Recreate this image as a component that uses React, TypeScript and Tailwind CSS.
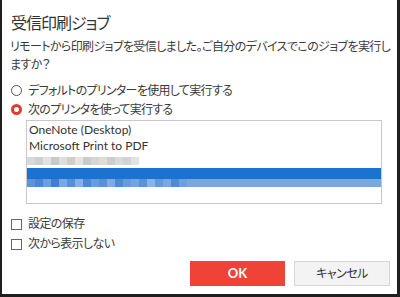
const font = "font-['Lato','Noto_Sans_CJK_JP',sans-serif] [font-feature-settings:'palt']"

const mosaicGray = ['#d9d9d9', '#cfcfcf', '#e2e2e2', '#c9c9c9', '#dedede', '#d2cdc6', '#e4e4e4', '#cacaca', '#d6d6d6', '#e0dcd6', '#cdcdcd', '#dadada', '#d3d3d3', '#e3e3e3']
const mosaicBlue = ['#5d94d8', '#4a86d3', '#6c9ee0', '#3f7fd0', '#7aa8e2', '#5890d7', '#86b0e5', '#4c88d4', '#6a9dde', '#5a92d8', '#80ace3', '#4f8ad5', '#679bdc', '#74a4e0', '#5b93d8', '#8ab2e6', '#6199da', '#78a7e1', '#5189d4', '#6ea0de']

const Radio = ({ checked }: { checked?: boolean }) =>
  checked ? (
    <span className="w-[11px] h-[11px] rounded-full border-[3px] border-[#e8392f] bg-white shrink-0" />
  ) : (
    <span className="w-[11px] h-[11px] rounded-full border border-[#555] bg-white shrink-0" />
  )

const Check = () => <span className="w-[11px] h-[11px] border border-[#666] bg-white shrink-0" />

const App = () => (
  <div className={`w-[400px] h-[297px] bg-white border-l-2 border-r-[3px] border-b-[3px] border-[#1f1f1f] overflow-hidden ${font}`}>
    <div className="pl-[9px] pr-[7px] pt-[11px] text-[#3a3a3a]">
      <h1 className="text-[16px] leading-[24px] tracking-[-1px] text-[#333] whitespace-nowrap">受信印刷ジョブ</h1>
      <p className="mt-[3px] text-[12px] leading-[18px] tracking-[-0.6px] whitespace-nowrap -ml-px">
        リモートから印刷ジョブを受信しました。ご自分のデバイスでこのジョブを実行し
        <br />
        ますか？
      </p>

      <div className="mt-[7px] flex flex-col text-[12px] tracking-[-0.7px]">
        <label className="flex items-center gap-[6px] h-[19px] whitespace-nowrap">
          <Radio />
          デフォルトのプリンターを使用して実行する
        </label>
        <label className="flex items-center gap-[6px] h-[19px] whitespace-nowrap">
          <Radio checked />
          次のプリンタを使って実行する
        </label>
      </div>

      <div className="mt-px ml-[15px] w-[356px] h-[84px] border border-[#c8c8c8] pt-px text-[12px] text-[#333]">
        <div className="h-[16px] leading-[16px] pl-[2px]">OneNote (Desktop)</div>
        <div className="h-[16px] leading-[16px] pl-[2px]">Microsoft Print to PDF</div>
        <div className="h-[14px] flex items-center">
          <div className="flex h-[8px] blur-[0.5px]">
            {mosaicGray.map((c, i) => (
              <span key={i} className="w-[8px] h-full" style={{ background: c }} />
            ))}
          </div>
        </div>
        <div className="h-[19px] flex flex-col">
          <div className="h-[11px] bg-[#1a72d1]" />
          <div className="h-[8px] bg-[#7aa8dd] flex">
            {mosaicBlue.map((c, i) => (
              <span key={i} className="w-[8px] h-full" style={{ background: c }} />
            ))}
          </div>
        </div>
      </div>

      <div className="mt-[10px] flex flex-col text-[12px] tracking-[-0.6px]">
        <label className="flex items-center gap-[6px] h-[20px] whitespace-nowrap">
          <Check />
          設定の保存
        </label>
        <label className="flex items-center gap-[6px] h-[20px] whitespace-nowrap">
          <Check />
          次から表示しない
        </label>
      </div>

      <div className="mt-[7px] flex justify-end gap-[9px]">
        <button className="w-[95px] h-[25px] bg-[#ef4238] text-white text-[13px] font-bold">OK</button>
        <button className="w-[96px] h-[25px] bg-[#f3f3f3] border border-[#d6d6d6] text-[#333] text-[12px] tracking-[-0.5px]">キャンセル</button>
      </div>
    </div>
  </div>
)

export default App
